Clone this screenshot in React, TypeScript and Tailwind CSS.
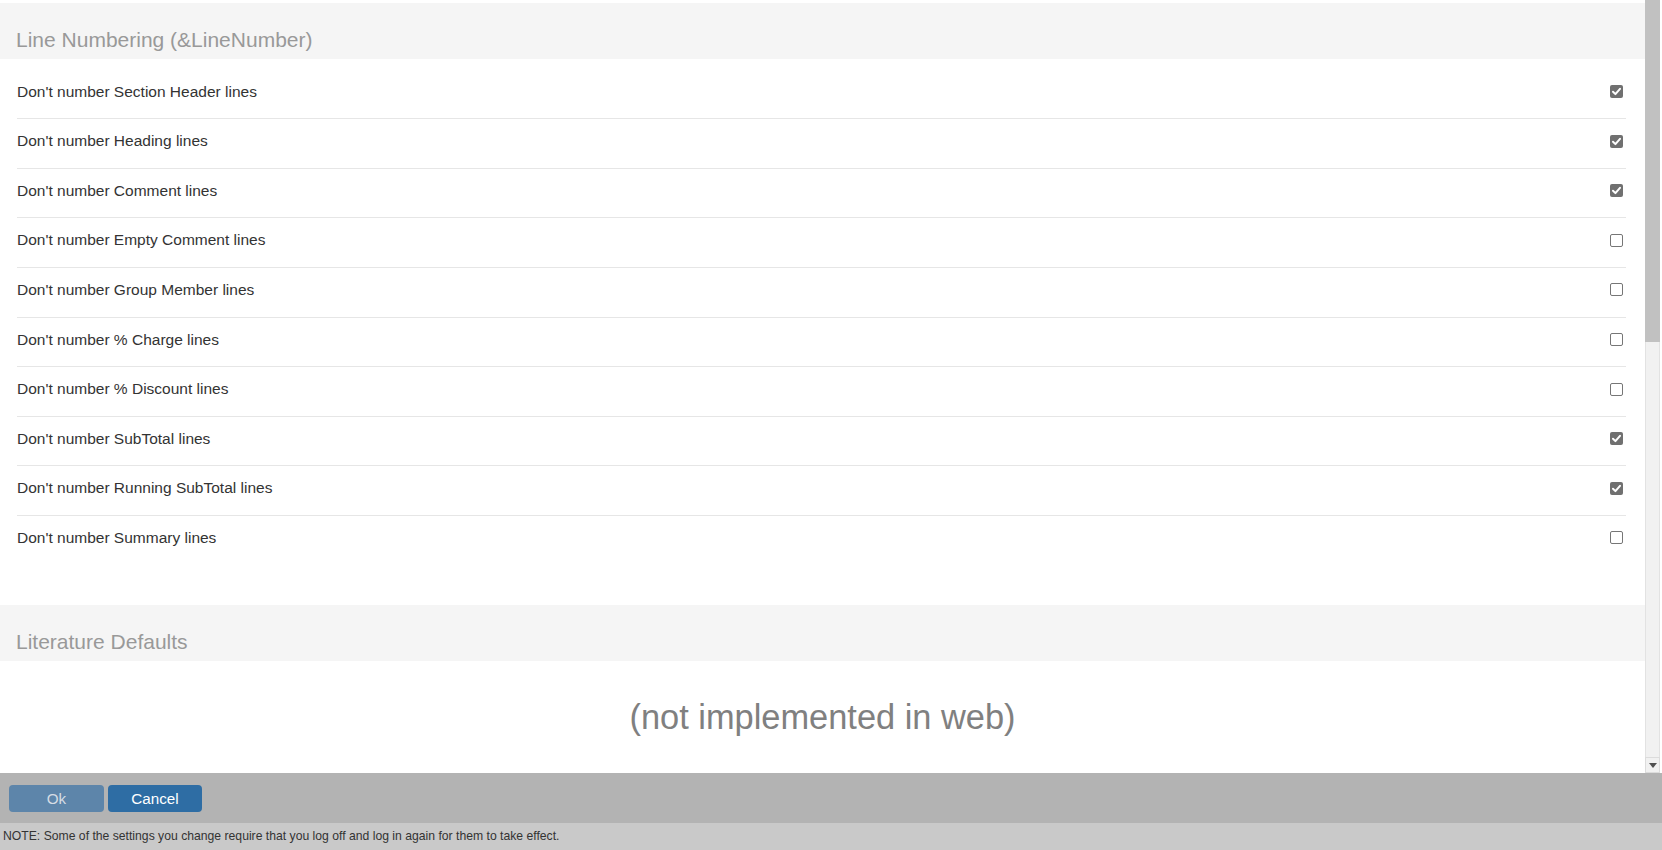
import React from 'react';

const lineOptions = [
  { label: "Don't number Section Header lines", checked: true },
  { label: "Don't number Heading lines", checked: true },
  { label: "Don't number Comment lines", checked: true },
  { label: "Don't number Empty Comment lines", checked: false },
  { label: "Don't number Group Member lines", checked: false },
  { label: "Don't number % Charge lines", checked: false },
  { label: "Don't number % Discount lines", checked: false },
  { label: "Don't number SubTotal lines", checked: true },
  { label: "Don't number Running SubTotal lines", checked: true },
  { label: "Don't number Summary lines", checked: false },
];

const Checkbox = ({ checked }: { checked: boolean }) =>
  checked ? (
    <svg width="13" height="13" viewBox="0 0 13 13" className="block">
      <rect x="0" y="0" width="13" height="13" rx="2" fill="#707070" />
      <path d="M3 6.8 L5.4 9.1 L10 3.8" fill="none" stroke="#ffffff" strokeWidth="2" strokeLinecap="round" strokeLinejoin="round" />
    </svg>
  ) : (
    <div className="w-[13px] h-[13px] rounded-[2px] border border-[#767676] bg-white" />
  );

const SectionHeader = ({ title }: { title: string }) => (
  <div className="h-[56px] bg-[#f5f5f5] pt-[25px] pl-[16px]">
    <h2 className="text-[21px] leading-[24px] text-[#999999] font-normal">{title}</h2>
  </div>
);

export default function App() {
  return (
    <div className="w-[1662px] h-[850px] bg-white overflow-hidden flex flex-col font-['Liberation_Sans',Arial,sans-serif]">
      <div className="h-[773px] flex pr-[2px]">
        <div className="flex-1 flex flex-col">
          <div className="h-[3px] bg-white" />
          <SectionHeader title="Line Numbering (&LineNumber)" />

          <div className="pt-[10.6px] pb-[39.4px] pl-[17px] pr-[19px]">
            {lineOptions.map((opt, idx) => (
              <div
                key={idx}
                className={`h-[49.6px] pt-[13px] ${idx < lineOptions.length - 1 ? 'border-b border-[#e6e6e6]' : ''}`}
              >
                <div className="h-[18px] flex items-center justify-between pr-[3px]">
                  <span className="text-[15.5px] leading-[18px] text-[#333333]">{opt.label}</span>
                  <Checkbox checked={opt.checked} />
                </div>
              </div>
            ))}
          </div>

          <SectionHeader title="Literature Defaults" />

          <div className="h-[112px] flex items-center justify-center">
            <span className="text-[34.4px] leading-[40px] text-[#808080]">(not implemented in web)</span>
          </div>
        </div>

        {/* scrollbar */}
        <div className="w-[15px] flex flex-col bg-[#f1f1f1]">
          <div className="h-[342px] bg-[#c1c1c1]" />
          <div className="flex-1 border-x border-[#e2e2e2]" />
          <div className="h-[16px] border border-[#dcdcdc] bg-[#f1f1f1] flex items-center justify-center">
            <svg width="8" height="5" viewBox="0 0 8 5">
              <path d="M0 0 L8 0 L4 5 Z" fill="#505050" />
            </svg>
          </div>
        </div>
      </div>

      <div className="h-[50px] bg-[#b3b3b3] pl-[9px] pt-[12px] flex gap-[4px]">
        <button className="w-[95px] h-[27px] rounded-[4px] bg-[#5d85aa] text-[#d6dde5] text-[15.2px] leading-none">
          Ok
        </button>
        <button className="w-[94px] h-[27px] rounded-[4px] bg-[#2e6da4] text-white text-[15.2px] leading-none">
          Cancel
        </button>
      </div>
      <div className="h-[27px] bg-[#c9c9c9] pl-[3px] flex items-center">
        <p className="text-[12.2px] text-[#333333]">
          NOTE: Some of the settings you change require that you log off and log in again for them to take effect.
        </p>
      </div>
    </div>
  );
}
